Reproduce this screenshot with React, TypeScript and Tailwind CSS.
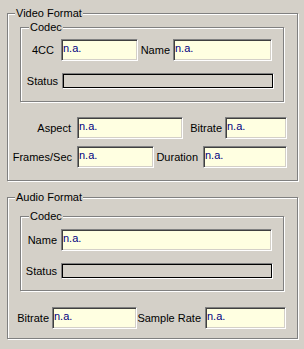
import type { ReactNode } from 'react';

const etched =
  'relative border border-[#808080] shadow-[inset_1px_1px_0_#ffffff,1px_1px_0_#ffffff]';

function Group({
  title,
  className,
  titleLeft,
  children,
}: {
  title: string;
  className: string;
  titleLeft: string;
  children: ReactNode;
}) {
  return (
    <div className={`${etched} ${className}`}>
      <span className={`absolute top-[-7px] ${titleLeft} bg-[#d4d0c8] px-[1px] leading-[13px] whitespace-nowrap`}>
        {title}
      </span>
      {children}
    </div>
  );
}

function Field({ label, labelW, pr, inputW }: { label: string; labelW: string; pr: string; inputW: string }) {
  return (
    <>
      <span className={`${labelW} ${pr} shrink-0 text-right leading-[13px] whitespace-nowrap`}>{label}</span>
      <div
        className={`${inputW} h-[22px] shrink-0 border border-t-[#808080] border-l-[#808080] border-r-white border-b-white bg-[#ffffe1] pl-[1px] pt-[2px] leading-[13px] text-[#000080] shadow-[inset_1px_1px_0_#404040,inset_-1px_-1px_0_#d4d0c8]`}
      >
        n.a.
      </div>
    </>
  );
}

function StatusBar({ labelW, pr, barW }: { labelW: string; pr: string; barW: string }) {
  return (
    <div className="mt-[12px] flex items-center">
      <span className={`${labelW} ${pr} shrink-0 text-right leading-[13px]`}>Status</span>
      <div
        className={`${barW} h-[16px] shrink-0 border border-t-[#808080] border-l-[#808080] border-r-white border-b-white shadow-[inset_0_0_0_1px_#000000]`}
      />
    </div>
  );
}

export default function App() {
  return (
    <div className="h-[349px] w-[304px] overflow-hidden bg-[#d4d0c8] pt-[13px] font-['Liberation_Sans',Arial,sans-serif] text-[11px] text-black">
      <Group title="Video Format" titleLeft="left-[7px]" className="ml-[7px] h-[168px] w-[291px]">
        <Group title="Codec" titleLeft="left-[8px]" className="ml-[12px] mt-[13px] h-[75px] w-[264px]">
          <div className="mt-[11px] flex items-center">
            <Field label="4CC" labelW="w-[40px]" pr="pr-[7px]" inputW="w-[77px]" />
            <Field label="Name" labelW="w-[35px]" pr="pr-[3px]" inputW="w-[99px]" />
          </div>
          <StatusBar labelW="w-[41px]" pr="pr-[4px]" barW="w-[212px]" />
        </Group>
        <div className="mt-[15px] flex items-center">
          <Field label="Aspect" labelW="w-[69px]" pr="pr-[6px]" inputW="w-[106px]" />
          <Field label="Bitrate" labelW="w-[42px]" pr="pr-[3px]" inputW="w-[62px]" />
        </div>
        <div className="mt-[7px] flex items-center">
          <Field label="Frames/Sec" labelW="w-[69px]" pr="pr-[5px]" inputW="w-[77px]" />
          <Field label="Duration" labelW="w-[49px]" pr="pr-[5px]" inputW="w-[84px]" />
        </div>
      </Group>

      <Group title="Audio Format" titleLeft="left-[7px]" className="ml-[7px] mt-[16px] h-[142px] w-[291px]">
        <Group title="Codec" titleLeft="left-[8px]" className="ml-[12px] mt-[18px] h-[75px] w-[264px]">
          <div className="mt-[12px] flex items-center">
            <Field label="Name" labelW="w-[40px]" pr="pr-[4px]" inputW="w-[211px]" />
          </div>
          <StatusBar labelW="w-[40px]" pr="pr-[4px]" barW="w-[212px]" />
        </Group>
        <div className="mt-[16px] flex items-center">
          <Field label="Bitrate" labelW="w-[44px]" pr="pr-[3px]" inputW="w-[85px]" />
          <Field label="Sample Rate" labelW="w-[68px]" pr="pr-[4px]" inputW="w-[81px]" />
        </div>
      </Group>
    </div>
  );
}
